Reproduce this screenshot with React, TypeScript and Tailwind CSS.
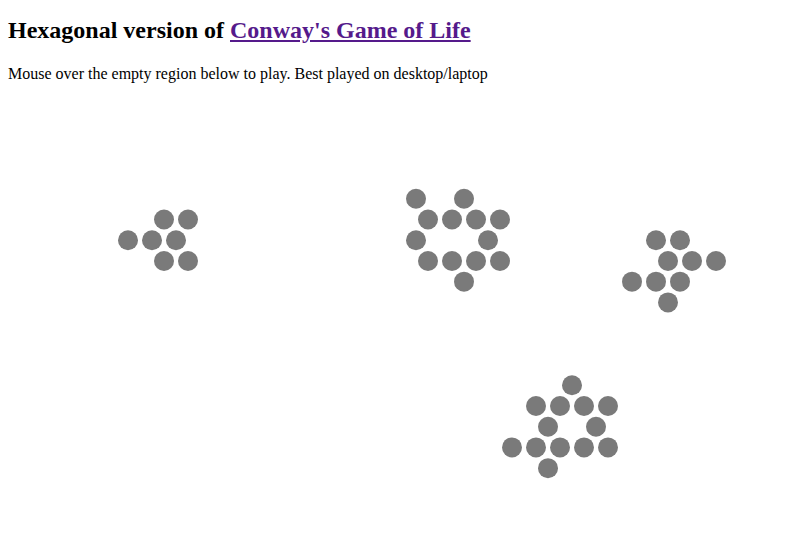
const SPACING = 24;
const ROW_H = 20.72;
const FIRST_ROW_Y = 198.8;
const BOARD_TOP = 83;
const BOARD_LEFT = 8;

// live cells: [row, column]; odd rows are shifted half a cell to the right
const liveCells: [number, number][] = [
  [0, 17], [0, 19],
  [1, 6], [1, 7], [1, 17], [1, 18], [1, 19], [1, 20],
  [2, 5], [2, 6], [2, 7], [2, 17], [2, 20], [2, 27], [2, 28],
  [3, 6], [3, 7], [3, 17], [3, 18], [3, 19], [3, 20], [3, 27], [3, 28], [3, 29],
  [4, 19], [4, 26], [4, 27], [4, 28],
  [5, 27],
  [9, 23],
  [10, 22], [10, 23], [10, 24], [10, 25],
  [11, 22], [11, 24],
  [12, 21], [12, 22], [12, 23], [12, 24], [12, 25],
  [13, 22],
];

const cellCenter = (row: number, col: number) => {
  const x = 8 + col * SPACING + (row % 2 === 1 ? SPACING / 2 : 0) - BOARD_LEFT;
  const y = FIRST_ROW_Y + row * ROW_H - BOARD_TOP;
  return { x, y };
};

const Board = () => (
  <svg width={787} height={460} className="block">
    {liveCells.map(([row, col]) => {
      const { x, y } = cellCenter(row, col);
      return <circle key={`${row}-${col}`} cx={x} cy={y} r={10} fill="#7a7a7a" />;
    })}
  </svg>
);

const App = () => {
  return (
    <div className="min-h-[554px] bg-white px-2 text-black font-['Liberation_Serif','Times_New_Roman',serif]">
      <h1 className="pt-4 text-[24px] leading-[28px] font-bold">
        Hexagonal version of{" "}
        <a href="#" className="text-[#551a8b] underline">
          Conway's Game of Life
        </a>
      </h1>
      <p className="mt-[21px] text-[16px] leading-[18px]">
        Mouse over the empty region below to play. Best played on desktop/laptop
      </p>
      <Board />
    </div>
  );
};

export default App;
